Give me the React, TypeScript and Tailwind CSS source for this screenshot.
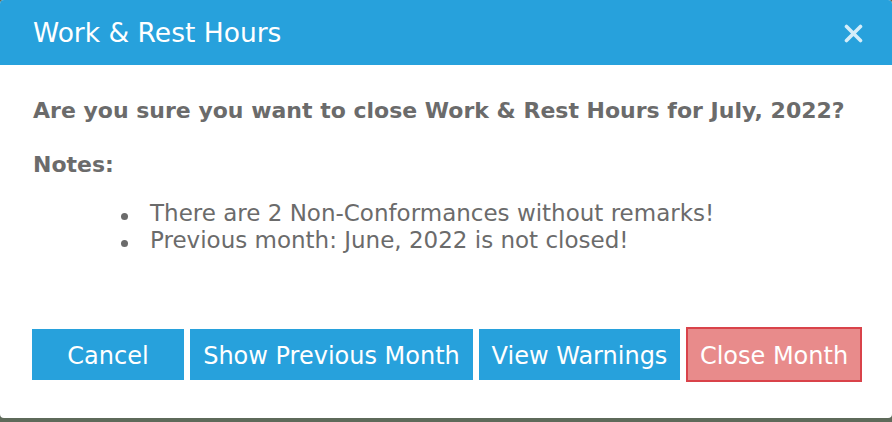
const font = { fontFamily: '"DejaVu Sans", Verdana, sans-serif' };

const notes = [
  "There are 2 Non-Conformances without remarks!",
  "Previous month: June, 2022 is not closed!",
];

const App = () => {
  return (
    <div className="w-[892px] h-[422px] bg-[#5e6a5a] overflow-hidden" style={font}>
      <div className="h-[418px] bg-white rounded-[4px] flex flex-col overflow-hidden">
        <div className="h-[65px] shrink-0 bg-[#27a1dc] flex items-center justify-between pl-[33px] pr-[29px]">
          <h1 className="text-[26.5px] text-white leading-none pt-[2px]">Work &amp; Rest Hours</h1>
          <button className="pt-[1px]">
            <svg width="19" height="19" viewBox="0 0 19 19">
              <path d="M2.5 2.5 L16.5 16.5 M16.5 2.5 L2.5 16.5" stroke="#d5edf9" strokeWidth="3.6" strokeLinecap="round" />
            </svg>
          </button>
        </div>
        <div className="px-[33px] pt-[33px] text-[#6b6b6b]">
          <p className="text-[22px] font-bold leading-[26px]">
            Are you sure you want to close Work &amp; Rest Hours for July, 2022?
          </p>
          <p className="text-[22px] font-bold leading-[26px] mt-[28px]">Notes:</p>
          <ul className="mt-[22px] text-[23px] leading-[27px]">
            {notes.map((n) => (
              <li key={n} className="flex items-start">
                <span className="w-[7px] h-[7px] rounded-full bg-[#6b6b6b] ml-[88px] mt-[13px] mr-[22px]" />
                <span>{n}</span>
              </li>
            ))}
          </ul>
        </div>
        <div className="flex items-center gap-[6px] pl-[32px] mt-[73px]">
          <button className="w-[152px] h-[51px] pt-[2px] bg-[#27a1dc] text-white text-[24px]">Cancel</button>
          <button className="w-[283px] h-[51px] pt-[2px] bg-[#27a1dc] text-white text-[24px]">Show Previous Month</button>
          <button className="w-[201px] h-[51px] pt-[2px] bg-[#27a1dc] text-white text-[24px]">View Warnings</button>
          <button className="w-[176px] h-[55px] pt-[2px] bg-[#e88b8b] border-2 border-[#d9434a] text-white text-[24px]">
            Close Month
          </button>
        </div>
      </div>
    </div>
  );
};

export default App;
